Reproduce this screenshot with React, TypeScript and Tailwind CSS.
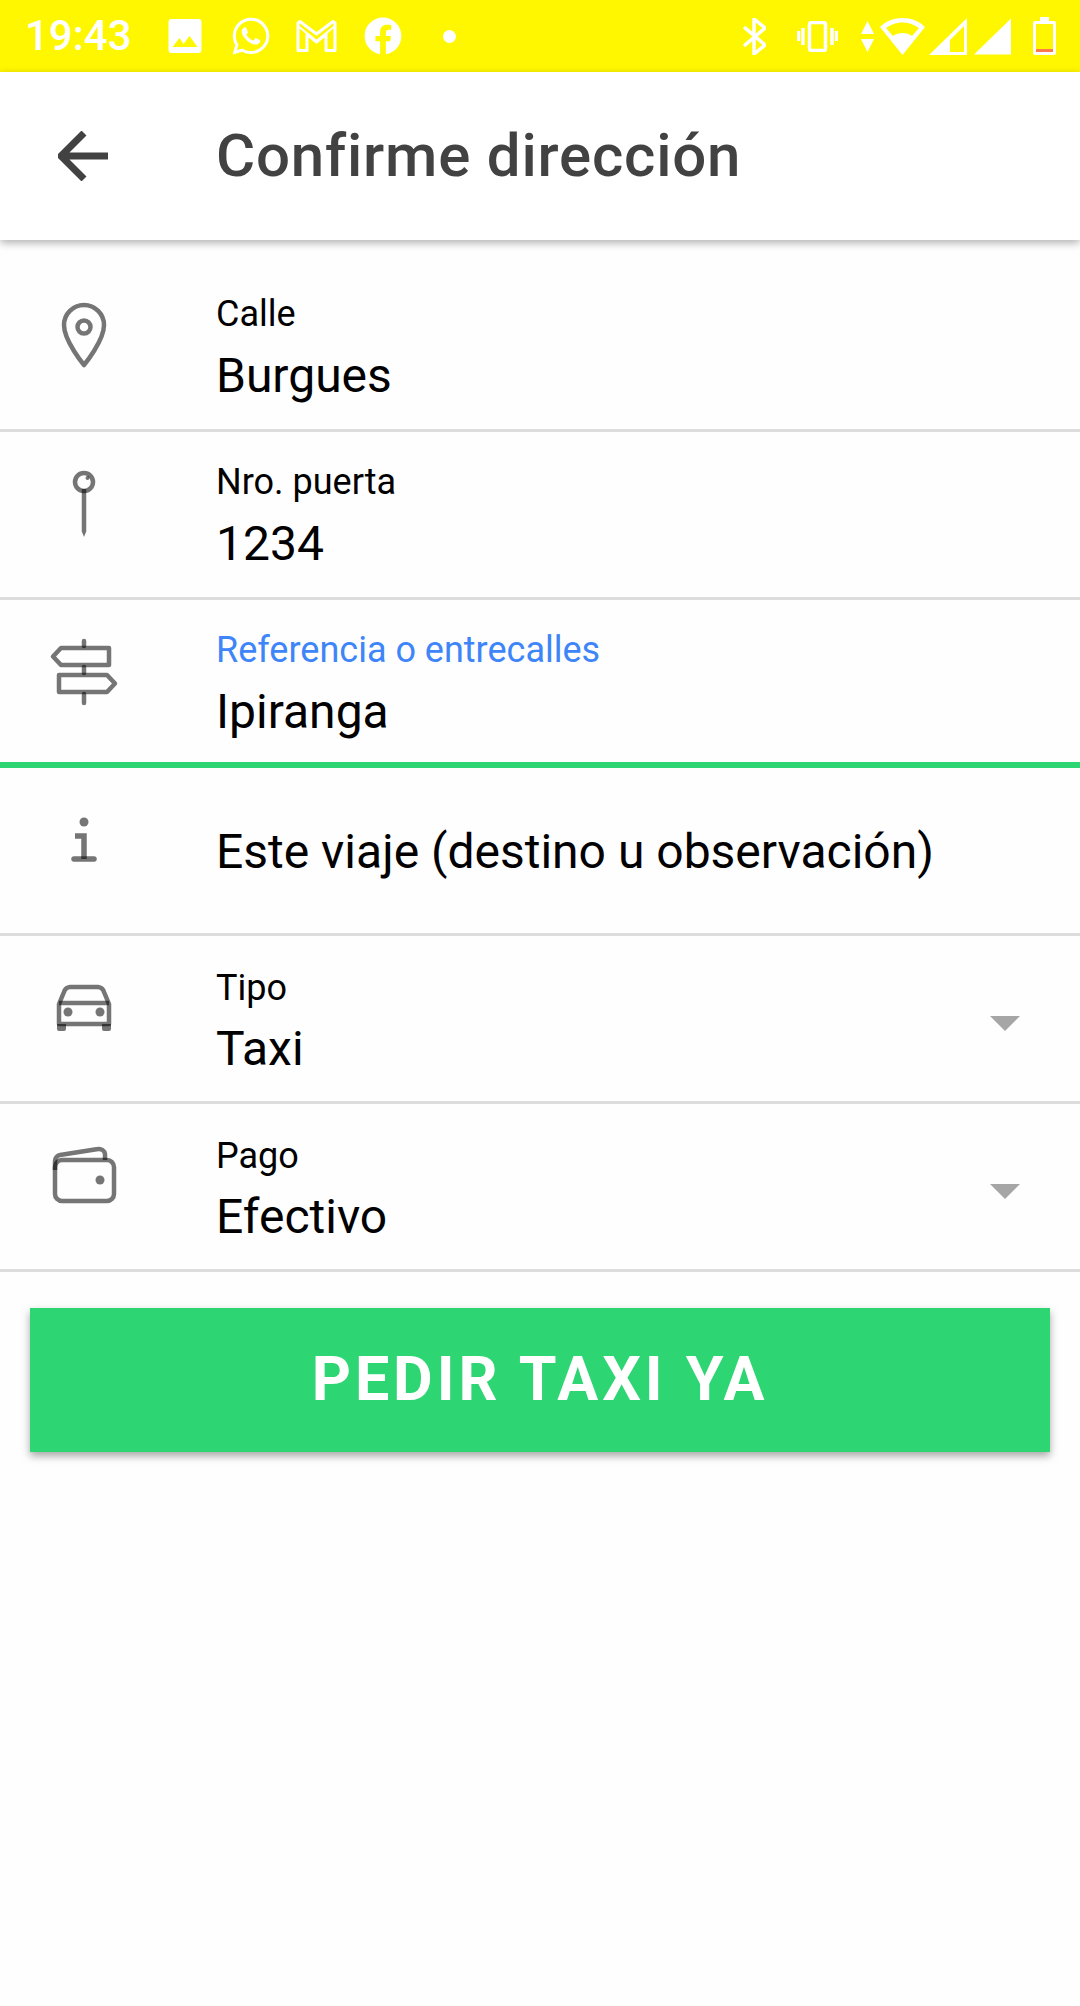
import { FaWhatsapp, FaFacebook } from "react-icons/fa";

const font = { fontFamily: "Roboto, sans-serif" };

function PinIcon() {
  return (
    <svg viewBox="0 0 72 72" className="h-[72px] w-[72px]" fill="none" stroke="#000" strokeOpacity="0.54" strokeWidth="4.5">
      <path d="M36 65C36 65 16 41 16 25a20 20 0 0 1 40 0C56 41 36 65 36 65Z" strokeLinejoin="round" />
      <circle cx="36" cy="27" r="6.5" />
    </svg>
  );
}

function DoorIcon() {
  return (
    <svg viewBox="0 0 72 72" className="h-[72px] w-[72px]" fill="none" stroke="#000" strokeOpacity="0.54" strokeWidth="4.5">
      <circle cx="36" cy="14" r="9" />
      <path d="M36 21V64" />
      <path d="M34 64H38L36 69Z" fill="#000" fillOpacity="0.54" stroke="none" />
      <circle cx="39.5" cy="10" r="2" fill="#000" fillOpacity="0.54" stroke="none" />
    </svg>
  );
}

function SignIcon() {
  return (
    <svg viewBox="0 0 72 72" className="h-[72px] w-[72px]" fill="none" stroke="#000" strokeOpacity="0.54" strokeWidth="4.5" strokeLinejoin="round">
      <path d="M13 12H61V29H13L5 20.5Z" />
      <path d="M11 39H59L67 47.5 59 56H11Z" />
      <path d="M36 5V10M36 31V37M36 58V67" strokeLinecap="round" />
    </svg>
  );
}

function InfoIcon() {
  return (
    <svg viewBox="0 0 72 72" className="h-[72px] w-[72px]" fill="none" stroke="#000" strokeOpacity="0.54" strokeWidth="5.5" strokeLinecap="round">
      <circle cx="36" cy="18" r="4.500" fill="#000" fillOpacity="0.54" stroke="none" />
      <path d="M27 32H36V55" strokeLinecap="butt" />
      <path d="M26 55H46" />
    </svg>
  );
}

function CarIcon() {
  return (
    <svg viewBox="0 0 72 72" className="h-[72px] w-[72px]" fill="none" stroke="#000" strokeOpacity="0.54" strokeWidth="4.5">
      <path d="M11 32 16 20a7 7 0 0 1 6-5H50a7 7 0 0 1 6 5L61 32V52H11Z" strokeLinejoin="round" />
      <path d="M11 31H61" />
      <path d="M9 52H18V57a2 2 0 0 1-2 2H11a2 2 0 0 1-2-2ZM54 52H63V57a2 2 0 0 1-2 2H56a2 2 0 0 1-2-2Z" fill="#000" fillOpacity="0.54" stroke="none" />
      <circle cx="20" cy="40" r="4.500" fill="#000" fillOpacity="0.54" stroke="none" />
      <circle cx="52" cy="40" r="4.500" fill="#000" fillOpacity="0.54" stroke="none" />
    </svg>
  );
}

function WalletIcon() {
  return (
    <svg viewBox="0 0 72 72" className="h-[72px] w-[72px]" fill="none" stroke="#000" strokeOpacity="0.54" strokeWidth="4.5">
      <rect x="7" y="20" width="59" height="41" rx="7" />
      <path d="M7 30V21a6 6 0 0 1 5-6L50 9a6 6 0 0 1 7 5V20" />
      <circle cx="52" cy="40" r="4.500" fill="#000" fillOpacity="0.54" stroke="none" />
    </svg>
  );
}

function Caret() {
  return (
    <svg viewBox="0 0 30 15" className="h-[15px] w-[30px]">
      <path d="M0 0H30L15 15Z" fill="#a6a6a6" />
    </svg>
  );
}

function Field({
  icon,
  label,
  value,
  labelClass = "text-black",
  line = "bg-[#dddddd]",
  lineHeight = "h-[3px]",
  select = false,
}: {
  icon: React.ReactNode;
  label?: string;
  value: string;
  labelClass?: string;
  line?: string;
  lineHeight?: string;
  select?: boolean;
}) {
  return (
    <div className="flex h-[168px] flex-col">
      <div className="flex min-h-0 flex-1">
        <div className="w-[216px] flex-none pl-12 pt-9">{icon}</div>
        {label ? (
          <div className={select ? "flex-1 pt-[31px]" : "flex-1 pt-[29px]"}>
            <div className={`text-[36px] leading-[42px] ${labelClass}`}>{label}</div>
            <div className={select ? "mt-[10px] text-[48px] leading-[60px] text-black" : "mt-[11px] text-[48px] leading-[60px] text-black"}>
              {value}
            </div>
          </div>
        ) : (
          <div className="flex-1 pt-[54px] text-[48px] leading-[60px] text-black">{value}</div>
        )}
        {select && (
          <div className="w-[90px] flex-none pt-[80px]">
            <Caret />
          </div>
        )}
      </div>
      <div className={`${lineHeight} flex-none ${line}`} />
    </div>
  );
}

function StatusBar() {
  return (
    <div className="flex h-[72px] items-center bg-[#fff700] pl-[25px] pr-[24px] text-white">
      <span className="w-[143px] flex-none text-[42px] font-medium leading-none">19:43</span>
      <svg viewBox="0 0 33 34" className="h-[34px] w-[34px]">
        <path fillRule="evenodd" fill="#fff" d="M3 0H30a3 3 0 0 1 3 3V31a3 3 0 0 1-3 3H3a3 3 0 0 1-3-3V3a3 3 0 0 1 3-3ZM4 28H29L21 17 15 25 11 19Z" />
      </svg>
      <FaWhatsapp className="ml-[28px] h-[42px] w-[42px]" />
      <svg viewBox="0 0 41 32" className="ml-[24px] h-[32px] w-[41px]" fill="none" stroke="#fff" strokeWidth="3" strokeLinejoin="round">
        <path d="M2 3 4 1.500 20.500 14 37 1.500 39 3V30.500H30V14L20.500 22 11 14V30.500H2Z" />
        <path d="M2 6 20.500 21 39 6" strokeWidth="2" />
      </svg>
      <FaFacebook className="ml-[27px] h-[38px] w-[38px]" />
      <span className="ml-[41px] h-[13px] w-[13px] rounded-full bg-white" />
      <div className="flex-1" />
      <svg viewBox="0 0 23 37" className="h-[37px] w-[23px]" fill="none" stroke="#fff" strokeWidth="3.500" strokeLinejoin="round">
        <path d="M1 9 22 27 11 36V1L22 10 1 28" />
      </svg>
      <svg viewBox="0 0 41 31" className="ml-[31px] h-[31px] w-[41px]" fill="none" stroke="#fff" strokeWidth="3.500">
        <rect x="12.500" y="1.500" width="16" height="28" rx="2" />
        <path d="M6 7V24M1.500 10V20M35 7V24M39.500 10V20" />
      </svg>
      <svg viewBox="0 0 13 31" className="ml-[23px] h-[31px] w-[13px]" fill="#fff">
        <path d="M6.500 0 13 13H0ZM0 18H13L6.500 31Z" />
      </svg>
      <svg viewBox="0 0 45 37" className="ml-[6px] h-[37px] w-[45px]" fill="#fff">
        <path fillRule="evenodd" d="M0 9C6 3 14 0 22.500 0S39 3 45 9L22.500 37ZM6 10 13 18C18 14 27 14 32 18L39 10C33 6 28 4.500 22.500 4.500S12 6 6 10Z" />
      </svg>
      <svg viewBox="0 0 38 37" className="ml-[4px] h-[37px] w-[38px]" fill="#fff">
        <path fillRule="evenodd" d="M38 0V37H0ZM35 8 21 22V34H35Z" />
      </svg>
      <svg viewBox="0 0 38 37" className="ml-[7px] h-[37px] w-[37px]" fill="#fff">
        <path d="M38 0V37H0Z" />
      </svg>
      <svg viewBox="0 0 23 38" className="ml-[22px] h-[38px] w-[23px]">
        <path fillRule="evenodd" fill="#fff" d="M7 0H16V4H21a2 2 0 0 1 2 2V36a2 2 0 0 1-2 2H2a2 2 0 0 1-2-2V6a2 2 0 0 1 2-2H7ZM3 7V35H20V7Z" />
        <rect x="3" y="32" width="17" height="3" fill="#ff7a4a" />
      </svg>
    </div>
  );
}

export default function App() {
  return (
    <div className="min-h-[2006px] bg-[#fefefe]" style={font}>
      <StatusBar />
      <header className="relative z-10 flex h-[168px] items-center bg-white shadow-[0_3px_8px_rgba(0,0,0,0.3)]">
        <div className="w-[216px] flex-none pl-[58px]">
          <svg viewBox="0 0 50 50" className="h-[50px] w-[50px]" fill="none" stroke="#424242" strokeWidth="7">
            <path d="M50 25H5M26 2 3 25 26 48" />
          </svg>
        </div>
        <h1 className="text-[60px] font-medium leading-none tracking-[0.8px] text-[#424242]">Confirme dirección</h1>
      </header>
      <div className="pt-6">
        <Field icon={<PinIcon />} label="Calle" value="Burgues" />
        <Field icon={<DoorIcon />} label="Nro. puerta" value="1234" />
        <Field
          icon={<SignIcon />}
          label="Referencia o entrecalles"
          value="Ipiranga"
          labelClass="text-[#3d85f8]"
          line="bg-[#2ed573]"
          lineHeight="h-[6px]"
        />
        <Field icon={<InfoIcon />} value="Este viaje (destino u observación)" />
        <Field icon={<CarIcon />} label="Tipo" value="Taxi" select />
        <Field icon={<WalletIcon />} label="Pago" value="Efectivo" select />
      </div>
      <div className="px-[30px] pt-9">
        <button className="h-[144px] w-full bg-[#2ed573] text-[61px] font-bold tracking-[3.9px] text-white shadow-[0_4px_8px_rgba(0,0,0,0.35)]">
          PEDIR TAXI YA
        </button>
      </div>
    </div>
  );
}
